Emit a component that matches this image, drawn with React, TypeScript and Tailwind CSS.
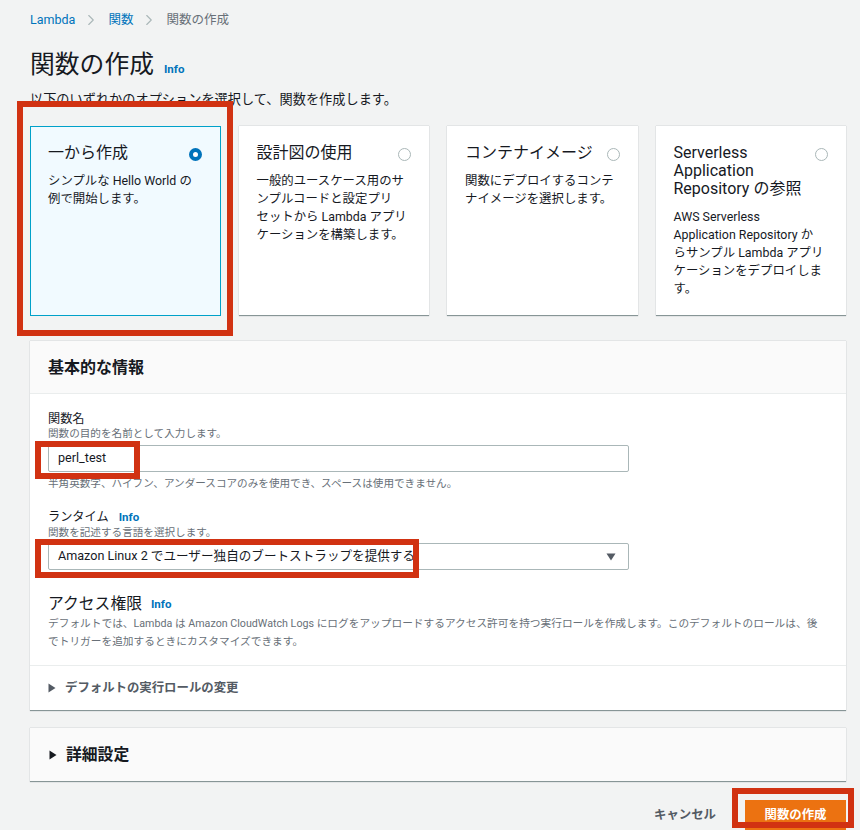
import { ChevronRight } from 'lucide-react';

const font = 'font-["Roboto","Noto_Sans_CJK_JP",sans-serif]';

const options = [
  {
    title: '一から作成',
    body: ['シンプルな Hello World の', '例で開始します。'],
    selected: true,
  },
  {
    title: '設計図の使用',
    body: ['一般的ユースケース用のサ', 'ンプルコードと設定プリ', 'セットから Lambda アプリ', 'ケーションを構築します。'],
  },
  {
    title: 'コンテナイメージ',
    body: ['関数にデプロイするコンテ', 'ナイメージを選択します。'],
  },
  {
    title: ['Serverless', 'Application', 'Repository の参照'],
    body: ['AWS Serverless', 'Application Repository か', 'らサンプル Lambda アプリ', 'ケーションをデプロイしま', 'す。'],
  },
];

function Lines({ lines }: { lines: string[] }) {
  return (
    <>
      {lines.map((line) => (
        <span key={line} className="block whitespace-nowrap">
          {line}
        </span>
      ))}
    </>
  );
}

function Info({ className = '' }: { className?: string }) {
  return <span className={`text-[11.5px] font-bold text-[#0073bb] ${className}`}>Info</span>;
}

function OptionCard({ option }: { option: (typeof options)[number] }) {
  const titleLines = Array.isArray(option.title) ? option.title : [option.title];
  return (
    <div
      className={`h-[190px] pr-[18px] ${
        option.selected
          ? 'border border-[#00a1c9] bg-[#f1faff] pl-[17px] pt-[17px]'
          : 'border-b border-b-[#879596] bg-white pl-[18px] pt-[18px] shadow-[0_0_1px_rgba(0,28,36,0.35)]'
      }`}
    >
      <div className="flex items-start justify-between">
        <div className="text-[16px] leading-[18px] text-[#16191f]">
          <Lines lines={titleLines} />
        </div>
        <span
          className={`mt-[4px] box-border h-[13px] w-[13px] shrink-0 rounded-full bg-white ${
            option.selected ? 'border-[4px] border-[#0073bb]' : 'border border-[#aab7b8]'
          }`}
        />
      </div>
      <p className="mt-[10px] text-[12.4px] leading-[18px] text-[#16191f]">
        <Lines lines={option.body} />
      </p>
    </div>
  );
}

function Caret({ className = '' }: { className?: string }) {
  return (
    <svg viewBox="0 0 8 10" className={`h-[10px] w-[8px] ${className}`} fill="currentColor">
      <path d="M0.5 0.5L7.5 5L0.5 9.5Z" />
    </svg>
  );
}

export default function App() {
  return (
    <div className={`relative h-[830px] w-[860px] overflow-hidden bg-[#f2f3f3] ${font}`}>
      <div className="pl-[30px] pr-[14px]">
        {/* Breadcrumb */}
        <nav className="flex h-[39px] items-center pt-[1px] text-[12.5px]">
          <span className="text-[#0073bb]">Lambda</span>
          <ChevronRight className="mx-[7px] h-[18px] w-[18px] text-[#aab7b8]" strokeWidth={1.5} />
          <span className="ml-[1px] text-[#0073bb]">関数</span>
          <ChevronRight className="mx-[7px] h-[18px] w-[18px] text-[#aab7b8]" strokeWidth={1.5} />
          <span className="ml-[1px] text-[#687078]">関数の作成</span>
        </nav>

        {/* Heading */}
        <div className="mt-[8px] flex h-[36px] items-center">
          <h1 className="text-[24.8px] leading-[36px] font-normal text-[#16191f]">関数の作成</h1>
          <Info className="ml-[10px] mt-[10px]" />
        </div>
        <p className="mt-[8px] h-[17px] text-[13.2px] leading-[17px] text-[#16191f]">
          以下のいずれかのオプションを選択して、関数を作成します。
        </p>

        {/* Options */}
        <div className="mt-[18px] grid grid-cols-4 gap-[18px]">
          {options.map((option, i) => (
            <OptionCard key={i} option={option} />
          ))}
        </div>

        {/* Basic info */}
        <section className="mt-[25px] border-b border-b-[#879596] bg-white shadow-[0_0_1px_rgba(0,28,36,0.35)]">
          <div className="flex h-[53px] items-center border-b border-[#eaeded] bg-[#fafafa] px-[18px] pt-[2px]">
            <h2 className="text-[16px] font-bold text-[#16191f]">基本的な情報</h2>
          </div>
          <div className="px-[18px] pt-[17px]">
            <div className="text-[12.2px] leading-[16px] text-[#16191f]">関数名</div>
            <div className="text-[10.6px] leading-[14px] text-[#687078]">関数の目的を名前として入力します。</div>
            <div className="mt-[4px] flex h-[27px] w-[581px] items-center rounded-[2px] border border-[#aab7b8] bg-white px-[9px] text-[12.6px] text-[#16191f]">
              perl_test
            </div>
            <div className="mt-[5px] text-[10.6px] leading-[14px] text-[#687078]">
              半角英数字、ハイフン、アンダースコアのみを使用でき、スペースは使用できません。
            </div>

            <div className="mt-[17px] flex items-center text-[12.2px] leading-[17px] text-[#16191f]">
              ランタイム
              <Info className="ml-[10px] mt-[1px]" />
            </div>
            <div className="text-[10.6px] leading-[14px] text-[#687078]">関数を記述する言語を選択します。</div>
            <div className="mt-[3px] flex h-[27px] w-[581px] items-center justify-between rounded-[2px] border border-[#aab7b8] bg-white pl-[9px] pr-[12px] text-[12.6px] text-[#16191f]">
              <span>Amazon Linux 2 でユーザー独自のブートストラップを提供する</span>
              <svg viewBox="0 0 10 8" className="h-[8px] w-[10px] text-[#545b64]" fill="currentColor">
                <path d="M0.5 0.5H9.5L5 7.5Z" />
              </svg>
            </div>

            <div className="mt-[24px] flex h-[20px] items-center text-[15.8px] text-[#16191f]">
              アクセス権限
              <Info className="ml-[9px] mt-[2px]" />
            </div>
            <p className="mt-[1px] whitespace-nowrap text-[10.7px] leading-[18px] text-[#687078]">
              デフォルトでは、Lambda は Amazon CloudWatch Logs にログをアップロードするアクセス許可を持つ実行ロールを作成します。このデフォルトのロールは、後
              <br />
              でトリガーを追加するときにカスタマイズできます。
            </p>
          </div>
          <div className="mt-[14px] flex h-[45px] items-center gap-[9px] border-t border-[#eaeded] px-[18px] text-[#545b64]">
            <Caret />
            <span className="text-[12.4px] font-bold">デフォルトの実行ロールの変更</span>
          </div>
        </section>

        {/* Advanced */}
        <section className="mt-[17px] flex h-[54px] items-center gap-[9px] border-b border-b-[#879596] bg-[#fafafa] px-[19px] text-[#16191f] shadow-[0_0_1px_rgba(0,28,36,0.35)]">
          <Caret />
          <span className="text-[15.8px] font-bold">詳細設定</span>
        </section>

        {/* Actions */}
        <div className="mt-[18px] flex items-center justify-end gap-[29px]">
          <span className="text-[12.4px] font-bold text-[#545b64]">キャンセル</span>
          <button className="flex h-[31px] w-[101px] items-center justify-center bg-[#ec7211] text-[12.4px] font-bold text-white">
            関数の作成
          </button>
        </div>
      </div>

      {/* Red annotation boxes */}
      <div className="absolute left-[17px] top-[101px] h-[235px] w-[216px] border-[6px] border-[#d13212]" />
      <div className="absolute left-[35px] top-[441px] h-[38px] w-[105px] border-[6px] border-[#d13212]" />
      <div className="absolute left-[35px] top-[539px] h-[39px] w-[384px] border-[6px] border-[#d13212]" />
      <div className="absolute left-[732px] top-[788px] h-[40px] w-[122px] border-[6px] border-[#d13212]" />
    </div>
  );
}
